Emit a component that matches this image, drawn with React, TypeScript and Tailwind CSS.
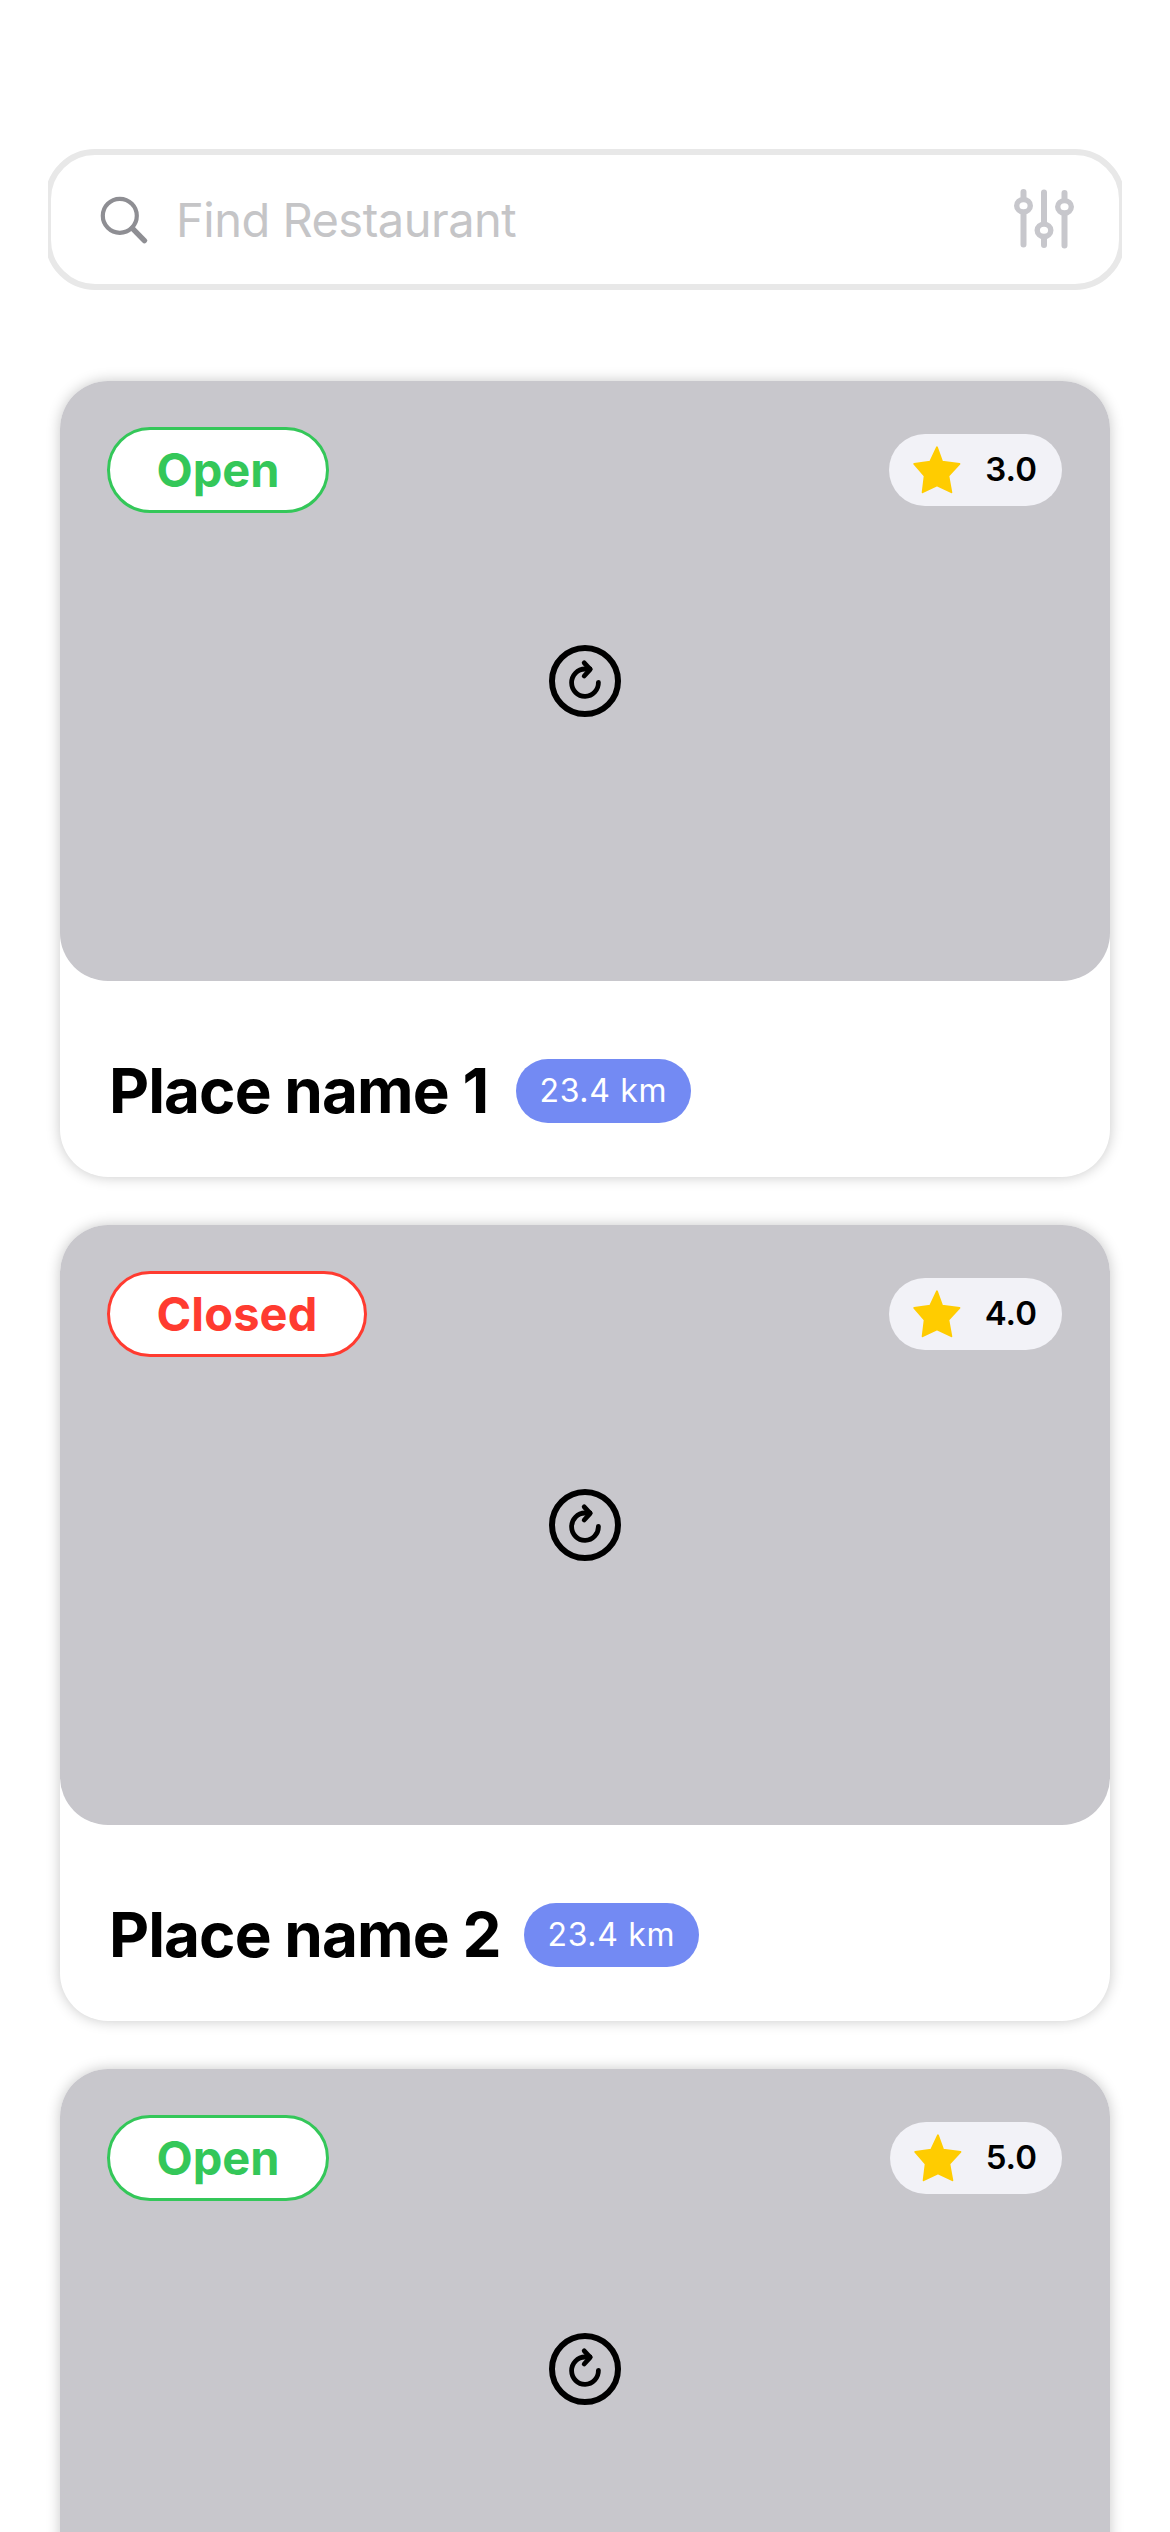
type Place = {
  name: string;
  open: boolean;
  rating: string;
  distance: string;
  nameWidth: string;
};

const places: Place[] = [
  { name: 'Place name 1', open: true, rating: '3.0', distance: '23.4 km', nameWidth: 'w-[407px]' },
  { name: 'Place name 2', open: false, rating: '4.0', distance: '23.4 km', nameWidth: 'w-[415px]' },
  { name: 'Place name 3', open: true, rating: '5.0', distance: '23.4 km', nameWidth: 'w-[415px]' },
];

function SearchIcon() {
  return (
    <svg width="48" height="48" viewBox="0 0 48 48" fill="none" stroke="#8e8e93" strokeLinecap="round">
      <circle cx="19.8" cy="19.8" r="17" strokeWidth="4.2" />
      <path d="M32.4 32.4 44.4 44.6" strokeWidth="5.4" />
    </svg>
  );
}

function SlidersIcon() {
  return (
    <svg className="mb-px" width="60" height="60" viewBox="0 0 60 60" fill="none" stroke="#c7c7cc" strokeLinecap="round">
      <g strokeWidth="6">
        <path d="M9.5 3V8M9.5 24V55.5" />
        <path d="M30 3.5V34M30 49V56" />
        <path d="M50.5 4V9M50.5 25V56.5" />
      </g>
      <g strokeWidth="5.4">
        <ellipse cx="9.5" cy="16.7" rx="6.8" ry="6.2" />
        <ellipse cx="30" cy="41.3" rx="6.8" ry="6.2" />
        <ellipse cx="50.5" cy="17.8" rx="6.8" ry="6.2" />
      </g>
    </svg>
  );
}

function StarIcon() {
  return (
    <svg width="48" height="48" viewBox="0 0 48 48">
      <path
        d="M24 1.2 29.2 15.7 46.5 18 35.4 30 38.4 46.3 24 39.4 9.6 46.3 11.6 30 1.2 18 17.2 15.7Z"
        fill="#ffcc00"
        stroke="#ffcc00"
        strokeWidth="1.8"
        strokeLinejoin="round"
      />
    </svg>
  );
}

function ReloadIcon() {
  return (
    <svg width="72" height="72" viewBox="0 0 72 72" fill="none" stroke="#000" strokeLinecap="round" strokeLinejoin="round">
      <circle cx="36" cy="36" r="33" strokeWidth="6" />
      <path d="M49.4 37.4A13.4 13.7 0 1 1 36 24H41" strokeWidth="4.8" />
      <path d="M35.2 17.8 41.2 24.4 35.2 31" strokeWidth="4.8" />
    </svg>
  );
}

function PlaceCard({ place }: { place: Place }) {
  return (
    <article className="h-[796px] shrink-0 rounded-[48px] bg-white shadow-[0_0_14px_rgba(0,0,0,0.22)]">
      <div className="relative flex h-[600px] items-center justify-center rounded-[48px] bg-[#c8c7cc]">
        <ReloadIcon />
        <div className="absolute inset-x-0 top-[46px] flex items-center justify-between pr-12 pl-[47px]">
          <span
            className={
              place.open
                ? 'h-[86px] rounded-full border-[3px] border-[#34c759] bg-white px-[46.5px] text-[47px] leading-[80px] font-bold text-[#34c759]'
                : 'h-[86px] rounded-full border-[3px] border-[#ff3b30] bg-white px-[46.5px] text-[47px] leading-[80px] font-bold tracking-[0.1px] text-[#ff3b30]'
            }
          >
            {place.open ? 'Open' : 'Closed'}
          </span>
          <span className="flex h-[72px] items-center gap-6 rounded-full bg-[#f2f2f7] pr-[25px] pl-6">
            <StarIcon />
            <span className="pb-[2px] text-[33px] leading-[70px] font-semibold text-black">{place.rating}</span>
          </span>
        </div>
      </div>
      <div className="flex h-[196px] items-center pt-6 pl-[49px]">
        <h2
          className={`${place.nameWidth} shrink-0 text-[62px] leading-[80px] font-bold tracking-[-0.95px] whitespace-nowrap text-black`}
        >
          {place.name}
        </h2>
        <span className="h-16 w-[175px] rounded-full bg-[#738af3] pl-[23.5px] text-[32px] leading-[64px] font-normal tracking-[0.65px] whitespace-nowrap text-white">
          {place.distance}
        </span>
      </div>
    </article>
  );
}

export default function App() {
  return (
    <main className="flex h-[2532px] w-[1170px] flex-col overflow-hidden bg-white pt-[149px] font-['Inter',sans-serif]">
      <div className="mx-12 shrink-0 overflow-hidden">
        <div className="-mx-[3px] flex h-[141px] items-center rounded-[50px] border-[6px] border-[#e8e8e8] pr-[45px] pl-[49px]">
          <SearchIcon />
          <span className="ml-[28px] flex-1 text-[47px] leading-[60px] tracking-[-0.5px] text-[#c5c5c7]">Find Restaurant</span>
          <SlidersIcon />
        </div>
      </div>
      <div className="mt-[91px] flex flex-col gap-12 px-[60px]">
        {places.map((place) => (
          <PlaceCard key={place.name} place={place} />
        ))}
      </div>
    </main>
  );
}
